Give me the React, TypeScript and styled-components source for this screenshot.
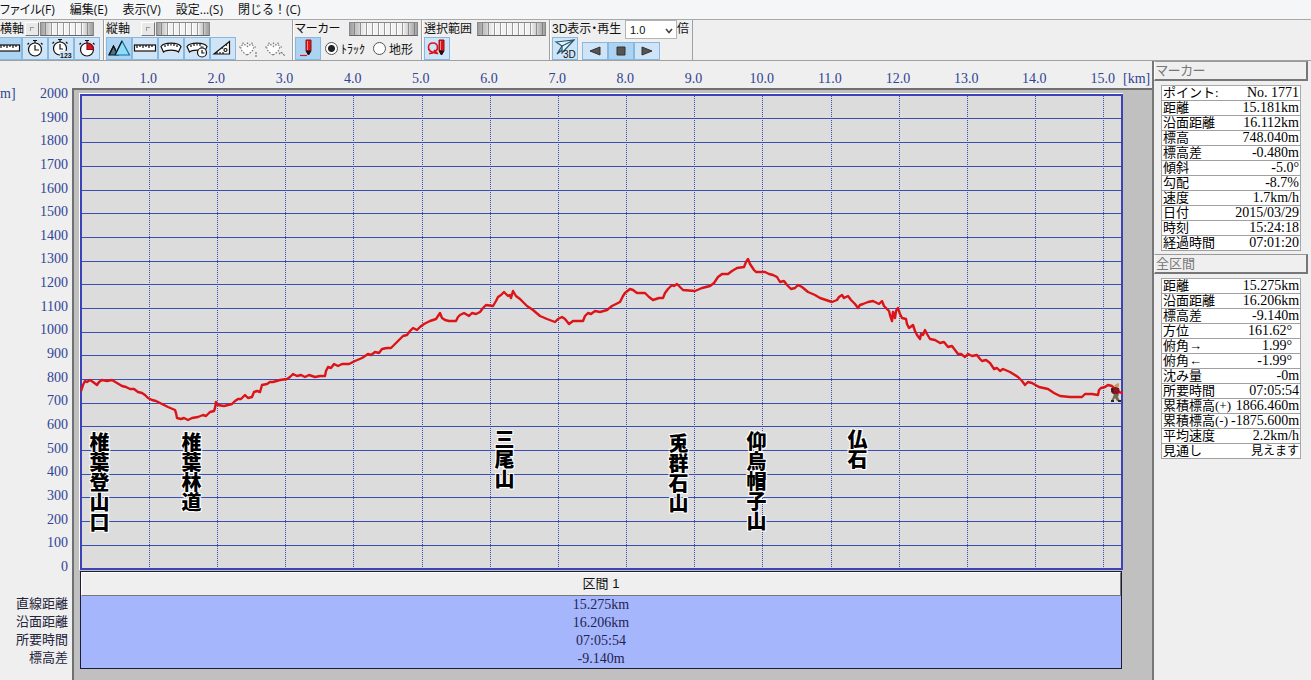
import React from "react";
import styled, { createGlobalStyle, css } from "styled-components";

const GlobalStyle = createGlobalStyle`
  * { box-sizing: border-box; }
  body {
    margin: 0;
    background: #efefef;
    color: #111;
    font-family: "Liberation Sans", "Noto Sans CJK JP", sans-serif;
    font-size: 12px;
  }
  button, select, input { font: inherit; color: inherit; margin: 0; padding: 0; }
`;

const LINE = "#3a4fae";
const INK = "#2f4494";

const Page = styled.div`
  display: flex;
  flex-direction: column;
  min-height: 100vh;
  overflow: hidden;
`;

/* ---------- menu ---------- */

const MenuBar = styled.nav`
  display: flex;
  flex: none;
  gap: 15px;
  height: 19px;
  background: #f5f6f8;
`;

const MenuItem = styled.button<{ $tight?: boolean }>`
  border: 0;
  background: none;
  font-family: "Open Sans", "Noto Sans CJK JP", sans-serif;
  font-size: 12px;
  line-height: 19px;
  font-feature-settings: ${(p) => (p.$tight ? '"palt"' : "normal")};
  white-space: nowrap;
`;

/* ---------- tool bar ---------- */

const ToolBar = styled.div`
  display: flex;
  flex: none;
  height: 42px;
  margin-left: -6px;
  border-top: 1px solid #a8a8a8;
  border-bottom: 1px solid #a0a0a0;
`;

const Group = styled.section<{ $w: number }>`
  flex: none;
  width: ${(p) => p.$w}px;
  padding-left: 1px;
  border-left: 1px solid #fff;
  border-right: 1px solid #a0a0a0;
`;

const GroupHead = styled.div<{ $spread?: boolean; $inset?: number }>`
  display: flex;
  align-items: center;
  justify-content: ${(p) => (p.$spread ? "space-between" : "flex-start")};
  height: 17px;
  padding: 0 3px 0 ${(p) => p.$inset ?? 0}px;
`;

const GroupTitle = styled.span<{ $w?: number }>`
  width: ${(p) => (p.$w ? `${p.$w}px` : "auto")};
  line-height: 16px;
  font-feature-settings: "palt";
  white-space: nowrap;
`;

const Row = styled.div<{ $gap?: number; $end?: boolean }>`
  display: flex;
  align-items: ${(p) => (p.$end ? "flex-end" : "center")};
  gap: ${(p) => p.$gap ?? 0}px;
  height: 23px;
`;

const Knob = styled.button`
  flex: none;
  width: 14px;
  height: 14px;
  margin-right: 1px;
  border: 1px solid;
  border-color: #fff #777 #777 #fff;
  background: linear-gradient(#999, #999) 4px 4px / 4px 1px no-repeat,
    linear-gradient(#999, #999) 4px 4px / 1px 4px no-repeat, #e8e8e8;
`;

const Wheel = styled.div<{ $w: number }>`
  flex: none;
  width: ${(p) => p.$w}px;
  height: 14px;
  border: 1px solid #8a8a8a;
  border-bottom-color: #666;
  background:
    linear-gradient(90deg, #6669 0, #fff0 22%, #fff0 78%, #6669 100%),
    repeating-linear-gradient(90deg, #f2f2f2 0 4px, #9a9a9a 4px 5px, #fff 5px 6px);
`;

const ToolButton = styled.button<{ $state?: "on" | "flat" }>`
  display: flex;
  flex: none;
  align-items: center;
  justify-content: center;
  width: 26px;
  height: 23px;
  border: 1px solid #86b8e0;
  background: #cfe5f7;
  ${(p) => p.$state === "on" && css`background: #acd3f2;`}
  ${(p) => p.$state === "flat" && css`background: none; border-color: transparent;`}
`;

const PlayButton = styled(ToolButton)`
  height: 18px;
`;

const RadioLabel = styled.label`
  display: flex;
  align-items: center;
  gap: 3px;
  margin-right: 4px;
  white-space: nowrap;
`;

const Radio = styled.input`
  appearance: none;
  width: 13px;
  height: 13px;
  border: 1px solid #555;
  border-radius: 50%;
  background: #fff;
  &:checked { background: radial-gradient(circle, #222 3px, #fff 4px); }
`;

const SelectBox = styled.div`
  position: relative;
  align-self: flex-start;
  height: 19px;
  width: 52px;
  svg { position: absolute; right: 4px; top: 8px; pointer-events: none; }
`;

const Select = styled.select`
  appearance: none;
  width: 52px;
  height: 19px;
  padding-left: 4px;
  border: 1px solid #b4b4b4;
  border-radius: 0;
  background: #fff;
  font-size: 11px;
`;

/* ---------- main area ---------- */

const Main = styled.main`
  display: flex;
  flex: 1;
`;

const AxisColumn = styled.div`
  display: flex;
  flex: none;
  flex-direction: column;
  width: 72px;
  padding: 23px 4px 13px 0;
`;

const YAxis = styled.ol`
  display: flex;
  flex: 1;
  flex-direction: column;
  justify-content: space-between;
  margin: 0 0 18px;
  padding: 0;
  list-style: none;
  text-align: right;
  color: ${INK};
  font: 14px/20px "Liberation Serif", serif;
`;

const YTick = styled.li`
  display: flex;
  justify-content: flex-end;
`;

const YUnit = styled.span`
  margin-right: auto;
`;

const StatName = styled.div`
  text-align: right;
  font-size: 13px;
  line-height: 18px;
  color: #23233a;
`;

const ChartColumn = styled.div`
  display: flex;
  flex: 1;
  flex-direction: column;
  min-width: 0;
`;

const XAxis = styled.div`
  display: grid;
  flex: none;
  grid-template-columns: minmax(0, 50fr) repeat(14, minmax(0, 100fr)) minmax(0, 80fr) 27px;
  height: 27px;
  padding: 8px 2px 0 8px;
  color: ${INK};
  font: 14px/20px "Liberation Serif", serif;
`;

const XTick = styled.span<{ $side?: "first" | "last" }>`
  text-align: center;
  ${(p) => p.$side === "first" && css`padding-left: 2px; text-align: left;`}
  ${(p) => p.$side === "last" && css`padding-right: 8px; text-align: right;`}
`;

const XUnit = styled.span`
  text-align: right;
`;

const Frame = styled.div`
  display: flex;
  flex: 1;
  flex-direction: column;
  padding: 3px 29px 11px 5px;
  border-top: 2px solid #707070;
  border-left: 2px solid #707070;
  background: #c0c0c0;
`;

const Plot = styled.div`
  position: relative;
  display: flex;
  flex: 1;
  min-height: 300px;
  border-top: 1px solid #fff;
  border-left: 1px solid #fff;
  background: #dcdcdc;
`;

const PlotSvg = styled.svg`
  position: absolute;
  inset: 0;
  width: 100%;
  height: 100%;
`;

const Place = styled.span`
  position: absolute;
  writing-mode: vertical-rl;
  font-family: "Noto Sans CJK JP", sans-serif;
  font-size: 20px;
  font-weight: 900;
  line-height: 20px;
  color: #000;
  white-space: nowrap;
  text-shadow: 1px 1px #fff, -1px -1px #fff, 1px -1px #fff, -1px 1px #fff;
`;

const Walker = styled.svg`
  position: absolute;
`;

const Segment = styled.section`
  flex: none;
  margin: 1px 1px 0;
  border: 1px solid #1c1c38;
  background: #a5b6fd;
`;

const SegmentTitle = styled.h2`
  margin: 0;
  height: 24px;
  border-top: 1px solid #fff;
  border-left: 1px solid #fff;
  border-right: 1px solid #777;
  border-bottom: 1px solid #777;
  background: #efefef;
  text-align: center;
  font-size: 13px;
  font-weight: 400;
  line-height: 22px;
`;

const SegmentValue = styled.div`
  text-align: center;
  font: 14px/18px "Liberation Serif", serif;
  color: #1f2450;
`;

/* ---------- side panel ---------- */

const Side = styled.aside`
  flex: none;
  width: 159px;
  padding: 0 3px 0 0;
  border-left: 2px solid #777;
`;

const PanelTitle = styled.h2`
  margin: 0;
  height: 20px;
  padding-left: 1px;
  border: 1px solid;
  border-color: #999 #777 #777 #fff;
  border-right-width: 2px;
  border-bottom-width: 2px;
  color: #777;
  font-size: 13px;
  font-weight: 400;
  line-height: 18px;
  font-feature-settings: "palt";
`;

const PanelBody = styled.div`
  padding: 4px 7px 3px;
`;

const DataTable = styled.table`
  width: 100%;
  border-collapse: collapse;
  border: 1px solid #a8a8a8;
  background: #fff;
  color: #000;
`;

const Name = styled.th`
  height: 15px;
  padding: 0 0 0 1px;
  border-bottom: 1px solid #a0a0a0;
  text-align: left;
  font: 400 13px/14px "Liberation Serif", "Noto Sans CJK JP", sans-serif;
  white-space: nowrap;
`;

const Value = styled.td<{ $word?: boolean }>`
  padding: 0 1px 0 0;
  border-bottom: 1px solid #a0a0a0;
  text-align: right;
  font: 14px/14px "Liberation Serif", "Noto Sans CJK JP", sans-serif;
  ${(p) => p.$word && css`font-size: 12px;`}
  white-space: pre;
`;

/* ---------- icons ---------- */

const Icon = ({ children, dim }: { children: React.ReactNode; dim?: boolean }) => (
  <svg width="24" height="21" viewBox="0 0 24 21" fill="#fff" stroke={dim ? "#777" : "#111"} strokeWidth="1.2" aria-hidden="true">
    {children}
  </svg>
);

const RulerIcon = () => (
  <Icon>
    <rect x="1.5" y="7" width="21" height="6" />
    <path d="M4 7v3M7 7v2M10 7v3M13 7v2M16 7v3M19 7v2" />
  </Icon>
);

const Watch = () => (
  <>
    <path d="M10 2.5h4M12 3v2M18 5l1.5 1.5M6 5 4.500 6.500" />
    <circle cx="12" cy="11.500" r="6.500" />
  </>
);

const WatchIcon = () => (
  <Icon>
    <Watch />
    <path d="M12 7v5h4" fill="none" />
  </Icon>
);

const WatchCountIcon = () => (
  <Icon>
    <g transform="translate(-1 -1)">
      <Watch />
      <path d="M12 7v5h3" fill="none" />
    </g>
    <rect x="11" y="13" width="13" height="8" fill="#cfe5f7" stroke="none" />
    <text x="11" y="20" fontSize="7" fontFamily="Liberation Sans" fontWeight="700" fill="#111" stroke="none">123</text>
  </Icon>
);

const WatchRedIcon = () => (
  <Icon>
    <Watch />
    <path d="M12 5v6.500h6.500A6.500 6.500 0 0 0 12 5z" fill="#d8141c" stroke="#8c1014" />
  </Icon>
);

const MountainIcon = () => (
  <Icon>
    <path d="M2 17 6.500 8 11 17z" fill="#4f7382" />
    <path d="M8 17 15 3l7.500 14z" fill="#8fdcf6" stroke="#176c9c" />
    <path d="M2 17 6.500 8l2 4M15 3 8 17" fill="none" />
  </Icon>
);

const ARC = "M2 8.500C5 4 19 4 22 8.500L19.500 14C17 11.500 7 11.500 4.500 14z";

const GaugeIcon = () => (
  <Icon>
    <path d={ARC} />
    <path d="M6 7v2M9 6v2M12 5.500v2M15 6v2M18 7v2" />
  </Icon>
);

const GaugeWatchIcon = () => (
  <Icon>
    <path d={ARC} />
    <path d="M6 7v2M9 6v2M12 5.500v2M15 6v2" />
    <circle cx="17" cy="14.500" r="4.500" />
    <path d="M17 12v3h2.500M15.500 9h3" fill="none" />
  </Icon>
);

const TriangleIcon = () => (
  <Icon>
    <path d="M3 16 18.500 3.500V16z" />
    <circle cx="14.500" cy="12" r="1.500" />
    <path d="M6 14v2M9 14v2M12 14v2M11 9.500l1 1M15 6.500l1 1" />
  </Icon>
);

const HeartIcon = ({ mark }: { mark: string }) => (
  <Icon dim>
    <path
      d="M10 17C5 14 3.500 11.500 4 8.500 5 6 8.500 6 10.500 8.500 12.500 6 16 6 16.500 8.500 17 11.500 15 14 10 17zM6 6V3M10.500 6V3M15 6V3M3.500 9H1.500M17.500 9h2"
      strokeDasharray="1.500 1.500"
    />
    <path d={mark} fill="none" strokeDasharray="2 1" />
  </Icon>
);

const Pencil = ({ x }: { x: number }) => (
  <g transform={`translate(${x} 0)`} strokeWidth="1">
    <path d="M0 2h5v11l-2.500 4L0 13z" fill="#e0141c" stroke="#8c1014" />
    <path d="M.5 13 2.500 17l2-4z" fill="#111" stroke="#111" />
    <path d="M1.500 3v9" stroke="#ff8a8a" />
  </g>
);

const PencilIcon = () => (
  <Icon>
    <Pencil x={10} />
    <path d="M4 17.500h7" stroke="#e0141c" />
  </Icon>
);

const LassoIcon = () => (
  <Icon>
    <path d="M4 15.500C8 16 13 13 12.500 9 12 4 4 3.500 3.500 9S10 15 12 15.500M9 12l4 4" fill="none" stroke="#d8141c" strokeWidth="1.600" />
    <Pencil x={14} />
  </Icon>
);

const Plane3DIcon = () => (
  <Icon>
    <path d="M3 4 21 2 9 15 9 8z" fill="#e4f4fc" stroke="#22536e" />
    <path d="M9 8 21 2M9 8 4 16l5-4" fill="none" stroke="#22536e" />
    <text x="10" y="20" fontSize="10" fontFamily="Liberation Sans" fill="#111" stroke="none">3D</text>
  </Icon>
);

const PlayShape = ({ d }: { d: string }) => (
  <svg width="14" height="12" viewBox="0 0 14 12" fill="#555" stroke="#333" aria-hidden="true">
    <path d={d} />
  </svg>
);

/* ---------- data ---------- */

const TRACK =
  "81,391 83,385 85,381 87,382 90,380 93,382 97,385 99,382 102,380 107,381 112,380 117,383 122,386 126,387 130,389 134,389 138,392 142,393 145,395 148,398 152,400 156,401 160,403 168,407 175,410 176,413 177,418 181,419 184,418 188,420 192,418 198,417 203,415 206,416 210,412 214,411 215,408 216,402 218,405 224,406 232,404 235,401 238,399 241,399 245,395 248,398 252,397 254,392 257,391 260,392 262,385 267,384 270,382 273,382 280,380 287,379 290,377 293,374 297,376 301,375 305,377 309,375 315,377 320,376 325,376 326,371 328,367 331,368 334,364 338,366 342,364 349,364 355,361 362,358 368,354 371,355 375,352 379,353 382,349 387,348 391,348 395,344 400,339 403,336 407,335 410,331 413,328 417,330 420,327 424,324 430,321 436,319 440,313 442,318 445,320 449,321 456,321 458,317 460,315 464,313 469,316 472,313 476,314 480,312 483,308 486,305 493,306 496,301 498,297 501,295 504,292 508,296 510,295 511,298 513,291 516,296 520,299 527,306 533,310 540,316 547,319 555,322 558,319 562,317 565,319 569,324 573,321 583,321 585,316 588,313 591,314 595,311 600,312 607,310 612,306 620,302 623,296 625,293 630,289 633,290 637,293 645,293 649,297 653,300 659,298 663,298 665,293 668,289 672,285 674,286 677,284 680,287 683,290 695,291 702,288 710,286 714,283 718,277 722,274 728,274 732,271 737,268 744,267 746,262 748,259 750,264 752,267 754,270 756,272 765,272 769,274 773,275 777,277 780,282 784,281 787,285 791,289 795,288 798,285 802,287 808,292 815,295 820,298 826,300 832,302 837,300 839,297 842,295 844,298 848,296 851,300 855,304 858,308 860,305 863,304 868,302 873,301 879,304 882,301 884,306 889,311 890,315 892,321 893,312 895,318 896,311 898,308 900,314 902,318 906,319 907,324 909,328 913,325 915,331 917,335 920,339 921,334 923,335 925,330 927,334 930,339 935,340 940,343 944,342 948,347 952,346 955,350 958,354 961,354 965,357 968,354 972,356 977,355 980,359 982,361 986,360 990,363 994,369 997,368 1000,371 1003,369 1010,372 1018,377 1022,381 1025,385 1028,382 1032,383 1039,387 1048,389 1054,393 1060,396 1070,397 1082,397 1085,394 1089,394 1092,394 1098,395 1099,390 1101,388 1105,387 1108,385 1112,386 1114,388 1118,392 1123,393";

/* plot rectangle in track units */
const PLOT = { x: 80, y: 94, w: 1043, h: 476 };
const left = (x: number) => `${((x - PLOT.x) / PLOT.w) * 100}%`;
const top = (y: number) => `${((y - PLOT.y) / PLOT.h) * 100}%`;

const PLACES: [string, number, number][] = [
  ["椎葉登山口", 89, 432],
  ["椎葉林道", 181, 432],
  ["三尾山", 494, 429],
  ["兎群石山", 668, 433],
  ["仰烏帽子山", 746, 431],
  ["仏石", 847, 429],
];

const MARKER: [string, string][] = [
  ["ポイント:", "No. 1771"],
  ["距離", "15.181km"],
  ["沿面距離", "16.112km"],
  ["標高", "748.040m"],
  ["標高差", "-0.480m"],
  ["傾斜", "-5.0°"],
  ["勾配", "-8.7%"],
  ["速度", "1.7km/h"],
  ["日付", "2015/03/29"],
  ["時刻", "15:24:18"],
  ["経過時間", "07:01:20"],
];

const TOTAL: [string, string][] = [
  ["距離", "15.275km"],
  ["沿面距離", "16.206km"],
  ["標高差", "-9.140m"],
  ["方位", "161.62°  "],
  ["俯角→", "1.99°  "],
  ["俯角←", "-1.99°  "],
  ["沈み量", "-0m"],
  ["所要時間", "07:05:54"],
  ["累積標高(+)", "1866.460m"],
  ["累積標高(-)", "-1875.600m"],
  ["平均速度", "2.2km/h"],
  ["見通し", "見えます"],
];

const SEGMENT: [string, string][] = [
  ["直線距離", "15.275km"],
  ["沿面距離", "16.206km"],
  ["所要時間", "07:05:54"],
  ["標高差", "-9.140m"],
];

const Panel = ({ title, rows }: { title: string; rows: [string, string][] }) => (
  <section>
    <PanelTitle>{title}</PanelTitle>
    <PanelBody>
      <DataTable>
        <tbody>
          {rows.map(([name, value]) => (
            <tr key={name}>
              <Name scope="row">{name}</Name>
              <Value $word={!/\d/.test(value)}>{value}</Value>
            </tr>
          ))}
        </tbody>
      </DataTable>
    </PanelBody>
  </section>
);

const range = (n: number) => Array.from({ length: n }, (_, i) => i);

export default function App() {
  return (
    <Page>
      <GlobalStyle />
      <MenuBar>
        {["ファイル(F)", "編集(E)", "表示(V)", "設定...(S)", "閉じる！(C)"].map((m, i) => (
          <MenuItem key={m} $tight={i === 0}>{m}</MenuItem>
        ))}
      </MenuBar>

      <ToolBar>
        <Group $w={110}>
          <GroupHead $inset={4}>
            <GroupTitle $w={25}>横軸</GroupTitle>
            <Knob aria-label="横軸 原点" />
            <Wheel $w={54} />
          </GroupHead>
          <Row>
            <ToolButton $state="on" aria-label="距離"><RulerIcon /></ToolButton>
            <ToolButton aria-label="時刻"><WatchIcon /></ToolButton>
            <ToolButton aria-label="経過時間"><WatchCountIcon /></ToolButton>
            <ToolButton aria-label="所要時間"><WatchRedIcon /></ToolButton>
          </Row>
        </Group>

        <Group $w={189}>
          <GroupHead>
            <GroupTitle $w={35}>縦軸</GroupTitle>
            <Knob aria-label="縦軸 原点" />
            <Wheel $w={54} />
          </GroupHead>
          <Row>
            <ToolButton $state="on" aria-label="標高"><MountainIcon /></ToolButton>
            <ToolButton aria-label="距離"><RulerIcon /></ToolButton>
            <ToolButton aria-label="速度"><GaugeIcon /></ToolButton>
            <ToolButton aria-label="平均速度"><GaugeWatchIcon /></ToolButton>
            <ToolButton aria-label="勾配"><TriangleIcon /></ToolButton>
            <ToolButton $state="flat" aria-label="心拍 1"><HeartIcon mark="M19 14v5" /></ToolButton>
            <ToolButton $state="flat" aria-label="心拍 2"><HeartIcon mark="M16 16l2-2 2 2 2 2" /></ToolButton>
          </Row>
        </Group>

        <Group $w={129}>
          <GroupHead $spread>
            <GroupTitle>マーカー</GroupTitle>
            <Wheel $w={69} />
          </GroupHead>
          <Row $gap={4}>
            <ToolButton $state="on" aria-label="マーカー"><PencilIcon /></ToolButton>
            <RadioLabel><Radio type="radio" name="target" defaultChecked />ﾄﾗｯｸ</RadioLabel>
            <RadioLabel><Radio type="radio" name="target" />地形</RadioLabel>
          </Row>
        </Group>

        <Group $w={128}>
          <GroupHead $spread>
            <GroupTitle>選択範囲</GroupTitle>
            <Wheel $w={69} />
          </GroupHead>
          <Row>
            <ToolButton aria-label="選択範囲"><LassoIcon /></ToolButton>
          </Row>
        </Group>

        <Group $w={143}>
          <GroupHead>
            <GroupTitle $w={73}>3D表示・再生</GroupTitle>
            <SelectBox>
              <Select aria-label="再生速度" defaultValue="1.0">
                <option>1.0</option>
                <option>2.0</option>
              </Select>
              <svg width="8" height="6" viewBox="0 0 8 6" fill="none" stroke="#444" strokeWidth="1.600">
                <path d="M1 1l3 3.500L7 1" />
              </svg>
            </SelectBox>
            <GroupTitle>倍</GroupTitle>
          </GroupHead>
          <Row $gap={4}>
            <ToolButton aria-label="3D表示"><Plane3DIcon /></ToolButton>
            <Row $end>
              <PlayButton aria-label="逆再生"><PlayShape d="M12 2v8L2 6z" /></PlayButton>
              <PlayButton $state="on" aria-label="停止"><PlayShape d="M3 2h8v8H3z" /></PlayButton>
              <PlayButton aria-label="再生"><PlayShape d="M2 2v8l10-4z" /></PlayButton>
            </Row>
          </Row>
        </Group>
      </ToolBar>

      <Main>
        <AxisColumn>
          <YAxis>
            {range(21).map((i) => (
              <YTick key={i}>
                {i === 0 && <YUnit>m]</YUnit>}
                {2000 - i * 100}
              </YTick>
            ))}
          </YAxis>
          {SEGMENT.map(([name]) => (
            <StatName key={name}>{name}</StatName>
          ))}
        </AxisColumn>

        <ChartColumn>
          <XAxis>
            <XTick $side="first">0.0</XTick>
            {range(14).map((i) => (
              <XTick key={i}>{(i + 1).toFixed(1)}</XTick>
            ))}
            <XTick $side="last">15.0</XTick>
            <XUnit>[km]</XUnit>
          </XAxis>
          <Frame>
            <Plot>
              <PlotSvg viewBox="80 94 1043 476" preserveAspectRatio="none" fill="none">
                <g stroke={LINE} strokeWidth="1" shapeRendering="crispEdges">
                  {range(19).map((i) => {
                    const y = Math.floor(95.3 + (i + 1) * 23.68) + 0.5;
                    return <line key={i} x1="80" x2="1123" y1={y} y2={y} />;
                  })}
                  {range(16).map((i) => {
                    const x = Math.floor(81.2 + i * 68.17) + 0.5;
                    return <line key={i} x1={x} x2={x} y1="94" y2="570" strokeDasharray="1 1" />;
                  })}
                </g>
                <rect x="81" y="95" width="1041" height="474" stroke="#3d42b8" strokeWidth="2" />
                <polyline points={TRACK} stroke="#dc1418" strokeWidth="2.400" strokeLinejoin="round" />
              </PlotSvg>
              {PLACES.map(([name, x, y]) => (
                <Place key={name} style={{ left: left(x), top: top(y) }}>{name}</Place>
              ))}
              <Walker width="12" height="20" viewBox="0 0 12 20" style={{ left: left(1110), top: top(383) }}>
                <path d="M4 3l2-2 3-1v3l-1 2H5z" fill="#c89a62" />
                <path d="M1 5l4-1 4 1 1 4-3 3-4-1-2-2z" fill="#8e1420" />
                <path d="M1 6l2-1 1 5-2-1z" fill="#222" />
                <path d="M4 11h5l-1 3 2 4H7l-2-3-2 3H1l2-4z" fill="#77684e" />
                <path d="M1 17h3v2H1zM8 17h3v2H8z" fill="#2a2a22" />
              </Walker>
            </Plot>
            <Segment>
              <SegmentTitle>区間 1</SegmentTitle>
              {SEGMENT.map(([name, value]) => (
                <SegmentValue key={name}>{value}</SegmentValue>
              ))}
            </Segment>
          </Frame>
        </ChartColumn>

        <Side>
          <Panel title="マーカー" rows={MARKER} />
          <Panel title="全区間" rows={TOTAL} />
        </Side>
      </Main>
    </Page>
  );
}
